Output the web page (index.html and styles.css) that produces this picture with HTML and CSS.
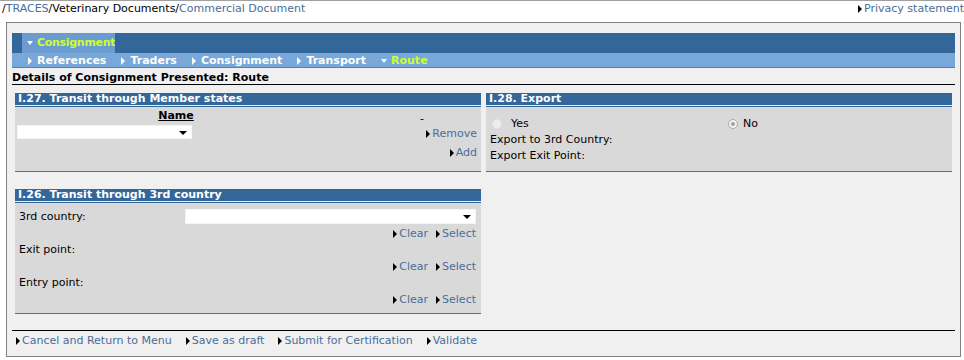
FILE: index.html
```html
<!DOCTYPE html>
<html lang="en">
<head>
    <meta charset="UTF-8">
    <title>TRACES - Commercial Document - Route</title>
    <link rel="stylesheet" href="styles.css">
</head>
<body>
    <div class="topbar">
        <div class="crumbs">/<a href="#">TRACES</a>/Veterinary Documents/<a href="#">Commercial Document</a></div>
        <a class="lnk privacy" href="#">Privacy statement</a>
    </div>

    <div class="frame">
        <!-- menu -->
        <div class="menu-top">
            <div class="tab"><span class="down"></span>Consignment</div>
        </div>
        <div class="menu-sub">
            <span class="item"><span class="right"></span>References</span>
            <span class="item"><span class="right"></span>Traders</span>
            <span class="item"><span class="right"></span>Consignment</span>
            <span class="item"><span class="right"></span>Transport</span>
            <span class="item current"><span class="down"></span>Route</span>
        </div>

        <div class="page-title">Details of Consignment Presented: Route</div>

        <div class="panels">
            <!-- I.27 -->
            <div class="panel top">
                <div class="panel-head">I.27. Transit through Member states</div>
                <div class="panel-body ms">
                    <div class="col-name">Name</div>
                    <div class="col-dash">-</div>
                    <div class="select small"><span class="caret"></span></div>
                    <div class="cell-right"><a class="lnk" href="#">Remove</a></div>
                    <div></div>
                    <div class="cell-right add"><a class="lnk" href="#">Add</a></div>
                </div>
            </div>

            <!-- I.28 -->
            <div class="panel top">
                <div class="panel-head">I.28. Export</div>
                <div class="panel-body export">
                    <div class="radios">
                        <label class="radio-opt"><span class="radio"></span>Yes</label>
                        <label class="radio-opt no"><span class="radio checked"></span>No</label>
                    </div>
                    <div class="line">Export to 3rd Country:</div>
                    <div class="line">Export Exit Point:</div>
                </div>
            </div>

            <!-- I.26 -->
            <div class="panel">
                <div class="panel-head">I.26. Transit through 3rd country</div>
                <div class="panel-body third">
                    <div class="row">
                        <span class="label">3rd country:</span>
                        <div class="select wide"><span class="caret"></span></div>
                    </div>
                    <div class="actions"><a class="lnk" href="#">Clear</a><a class="lnk" href="#">Select</a></div>
                    <div class="row"><span class="label">Exit point:</span></div>
                    <div class="actions"><a class="lnk" href="#">Clear</a><a class="lnk" href="#">Select</a></div>
                    <div class="row"><span class="label">Entry point:</span></div>
                    <div class="actions"><a class="lnk" href="#">Clear</a><a class="lnk" href="#">Select</a></div>
                </div>
            </div>
        </div>

        <div class="footer">
            <a class="lnk" href="#">Cancel and Return to Menu</a>
            <a class="lnk" href="#">Save as draft</a>
            <a class="lnk" href="#">Submit for Certification</a>
            <a class="lnk" href="#">Validate</a>
        </div>
    </div>
</body>
</html>
```

FILE: styles.css
```css
body {
    margin: 0;
    font-family: "DejaVu Sans", Verdana, sans-serif;
    font-size: 11px;
    color: #000;
    background-color: #fff;
    overflow: hidden;
}
a {
    color: #4a6e9a;
    text-decoration: none;
}
/* small black arrow before links */
.lnk::before {
    content: "";
    display: inline-block;
    width: 0;
    height: 0;
    border-top: 4px solid transparent;
    border-bottom: 4px solid transparent;
    border-left: 4px solid #000;
    margin-right: 2px;
    vertical-align: -1px;
}
.topbar {
    border-top: 1px solid #a0a0a0;
    height: 16px;
    line-height: 16px;
    display: flex;
    justify-content: space-between;
    padding-left: 2px;
    white-space: nowrap;
}
.frame {
    margin: 5px 3px 0 6px;
    border: 1px solid #808080;
    background-color: #f0f0f0;
    padding: 10px 5px 8px 5px;
}
/* menu */
.menu-top {
    background-color: #336699;
    height: 20px;
    padding-left: 10px;
}
.tab {
    width: 93px;
    height: 20px;
    line-height: 20px;
    background-color: #6b9bd1;
    color: #ccff33;
    font-weight: bold;
    padding-left: 5px;
    box-sizing: border-box;
    white-space: nowrap;
    overflow: hidden;
    letter-spacing: -0.3px;
}
.down {
    display: inline-block;
    width: 0;
    height: 0;
    border-left: 3px solid transparent;
    border-right: 3px solid transparent;
    border-top: 4px solid #fff;
    margin-right: 4px;
    vertical-align: 1px;
}
.right {
    display: inline-block;
    width: 0;
    height: 0;
    border-top: 4px solid transparent;
    border-bottom: 4px solid transparent;
    border-left: 4px solid #fff;
    margin-right: 5px;
    vertical-align: -1px;
}
.menu-sub {
    background-color: #77a8d9;
    height: 14px;
    line-height: 15px;
    border-bottom: 1px solid #5a7ea6;
    padding-left: 16px;
    display: flex;
    gap: 15px;
    color: #fff;
    font-weight: bold;
    white-space: nowrap;
}
.menu-sub .current {
    color: #ccff33;
}
.page-title {
    font-weight: bold;
    margin-top: 3px;
    height: 13px;
    line-height: 13px;
    border-bottom: 1px solid #000;
}
/* panels */
.panels {
    display: grid;
    grid-template-columns: 466px 466px;
    column-gap: 5px;
    row-gap: 17px;
    padding: 8px 0 0 3px;
}
.panel {
    display: flex;
    flex-direction: column;
    background-color: #d9d9d9;
    border-bottom: 1px solid #4f7399;
}
.panel.top {
    height: 79px;
    box-sizing: border-box;
}
.panel-head {
    background-color: #336699;
    color: #fff;
    font-weight: bold;
    height: 12px;
    line-height: 12px;
    padding-left: 3px;
    border-bottom: 1px solid #e6edf4;
}
.panel-body {
    flex: 1;
    border-top: 1px solid #336699;
    padding: 0 4px 0 2px;
}
.select {
    background-color: #fff;
    border: 1px solid #f4f4f4;
    box-sizing: border-box;
    position: relative;
}
.caret {
    position: absolute;
    right: 4px;
    top: 5px;
    border-left: 4px solid transparent;
    border-right: 4px solid transparent;
    border-top: 4px solid #000;
}
.select.small {
    width: 175px;
    height: 14px;
}
.ms {
    display: grid;
    grid-template-columns: 318px 1fr;
    grid-template-rows: 16px 17px 18px;
    padding-top: 2px;
}
.col-name {
    text-align: center;
    font-weight: bold;
    text-decoration: underline;
}
.col-dash {
    text-align: right;
    padding-right: 53px;
    padding-top: 4px;
    line-height: 12px;
}
.cell-right {
    text-align: right;
    padding-top: 2px;
}
.cell-right.add {
    padding-top: 4px;
}
.export {
    padding: 9px 4px 0 4px;
}
.radios {
    display: flex;
    height: 16px;
    line-height: 16px;
}
.radio-opt {
    display: flex;
    align-items: center;
    width: 236px;
}
.radio-opt.no {
    width: auto;
}
.radio {
    width: 10px;
    height: 10px;
    border-radius: 50%;
    border: 1px solid #e4e4e4;
    background-color: #ececec;
    box-sizing: border-box;
    margin: 0 9px 0 2px;
    position: relative;
}
.radio-opt.no .radio {
    margin-right: 5px;
    border-color: #a8a8a8;
    background-color: #f4f4f4;
}
.radio.checked::after {
    content: "";
    position: absolute;
    left: 2px;
    top: 2px;
    width: 4px;
    height: 4px;
    border-radius: 50%;
    background-color: #a0a0a0;
}
.line {
    height: 16px;
    line-height: 16px;
}
.third {
    padding: 6px 5px 5px 4px;
}
.third .row {
    display: flex;
    justify-content: space-between;
    height: 16px;
    line-height: 16px;
}
.select.wide {
    width: 291px;
    height: 15px;
}
.actions {
    display: flex;
    justify-content: flex-end;
    gap: 8px;
    height: 16px;
    line-height: 16px;
    padding-top: 1px;
}
.footer {
    margin-top: 16px;
    border-top: 1px solid #000;
    padding: 3px 0 0 4px;
    display: flex;
    gap: 14px;
    line-height: 14px;
}
```
